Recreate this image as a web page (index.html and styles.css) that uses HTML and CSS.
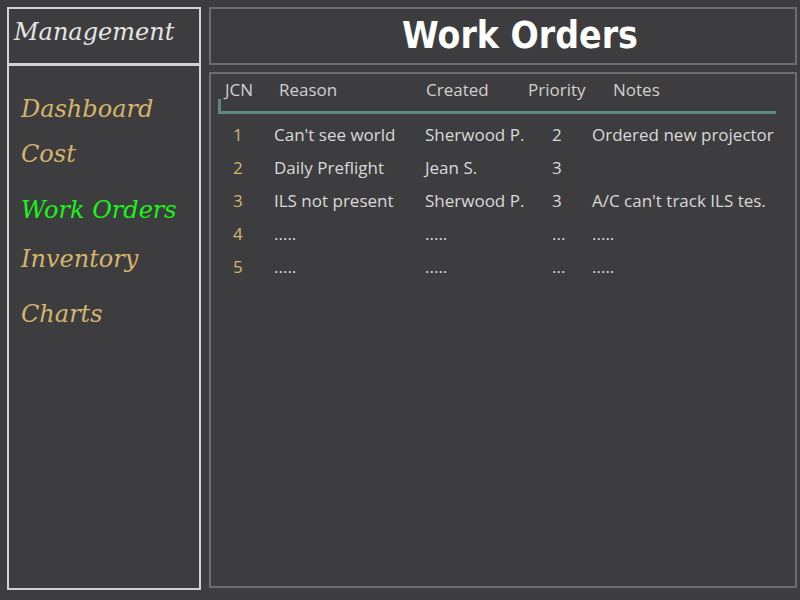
FILE: index.html
```html
<!DOCTYPE html>
<html>
<head>
<meta charset="utf-8">
<link rel="stylesheet" href="styles.css">
</head>
<body>
<div class="app">
  <aside class="sidebar">
    <div class="side-head">Management</div>
    <nav class="menu">
      <div class="item i1">Dashboard</div>
      <div class="item i2">Cost</div>
      <div class="item i3 active">Work Orders</div>
      <div class="item i4">Inventory</div>
      <div class="item i5">Charts</div>
    </nav>
  </aside>
  <main class="main">
    <header class="title">Work Orders</header>
    <section class="content">
      <div class="thead">
        <span>JCN</span><span>Reason</span><span>Created</span><span>Priority</span><span>Notes</span>
      </div>
      <div class="rule"></div>
      <div class="rows">
        <div class="row"><span class="num">1</span><span>Can't see world</span><span>Sherwood P.</span><span>2</span><span>Ordered new projector</span></div>
        <div class="row"><span class="num">2</span><span>Daily Preflight</span><span>Jean S.</span><span>3</span><span></span></div>
        <div class="row"><span class="num">3</span><span>ILS not present</span><span>Sherwood P.</span><span>3</span><span>A/C can't track ILS tes.</span></div>
        <div class="row"><span class="num">4</span><span>.....</span><span>.....</span><span>...</span><span>.....</span></div>
        <div class="row"><span class="num">5</span><span>.....</span><span>.....</span><span>...</span><span>.....</span></div>
      </div>
    </section>
  </main>
</div>
</body>
</html>
```
FILE: styles.css
```css
html, body {
  margin: 0;
  padding: 0;
  background: #3d3d3f;
  width: 800px;
  height: 600px;
  overflow: hidden;
}
.app {
  display: flex;
  align-items: flex-start;
  padding: 7px 3px 0 7px;
  gap: 8px;
  height: 600px;
  box-sizing: border-box;
}
.sidebar {
  width: 194px;
  height: 583px;
  border: 2px solid #d3d3d3;
  box-sizing: border-box;
  display: flex;
  flex-direction: column;
}
.side-head {
  height: 57px;
  border-bottom: 3px solid #d3d3d3;
  box-sizing: border-box;
  font-family: "DejaVu Serif", serif;
  font-style: italic;
  font-size: 24px;
  color: #e4e4e4;
  padding: 9px 0 0 5px;
}
.menu {
  font-family: "DejaVu Serif", serif;
  font-style: italic;
  color: #d5b46c;
  padding-left: 12px;
}
.item {
  font-size: 24px;
  line-height: 30px;
}
.i1 { margin-top: 28px; }
.i2 { margin-top: 15px; }
.i3 { margin-top: 26px; }
.i4 { margin-top: 19px; }
.i5 { margin-top: 25px; }
.active { color: #18f518; }
.main {
  flex: 1;
  display: flex;
  flex-direction: column;
  gap: 7px;
}
.title {
  height: 58px;
  border: 2px solid #6d6d6d;
  box-sizing: border-box;
  text-align: center;
  padding-left: 34px;
  font-family: "DejaVu Sans", sans-serif;
  font-stretch: condensed;
  font-weight: bold;
  font-size: 37px;
  line-height: 54px;
  color: #ffffff;
}
.content {
  height: 516px;
  border: 2px solid #6d6d6d;
  box-sizing: border-box;
  padding: 4px 19px 0 7px;
  font-family: "Open Sans", sans-serif;
  font-size: 17px;
  color: #d9d9d9;
}
.thead {
  display: grid;
  grid-template-columns: 54px 147px 102px 85px 1fr;
  padding-left: 7px;
  line-height: 24px;
  color: #d0d0d0;
}
.rule {
  height: 12px;
  border-left: 3px solid #5b8a7b;
  border-bottom: 3px solid #5b8a7b;
  margin-top: -3px;
}
.rows {
  padding-top: 9px;
}
.row {
  display: grid;
  grid-template-columns: 56px 151px 127px 40px 1fr;
  height: 33px;
  line-height: 24px;
  white-space: nowrap;
}
.num {
  color: #d5b46c;
  padding-left: 15px;
}
```
